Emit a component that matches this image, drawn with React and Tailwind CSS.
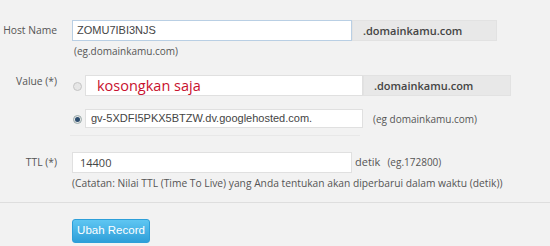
export default function App() {
  const sans = { fontFamily: '"Open Sans", "Liberation Sans", sans-serif' };
  const arial = { fontFamily: '"Liberation Sans", Arial, sans-serif' };

  return (
    <div className="w-[550px] h-[246px] overflow-hidden bg-[#f2f2f2] text-[#555]" style={sans}>
      <div className="pt-[20px]">
        {/* Host Name */}
        <div className="flex">
          <div className="w-[57px] shrink-0 text-right text-[10.3px] leading-[21px] whitespace-nowrap">Host Name</div>
          <div className="ml-[15px]">
            <div className="flex items-start">
              <div className="w-[280px] h-[21px] border border-[#b9cfe4] bg-white pl-[4px] text-[11px] leading-[19px] text-[#444]" style={arial}>
                ZOMU7IBI3NJS
              </div>
              <div className="w-[145px] h-[21px] bg-[#e8e8e8] border border-[#e2e2e2] pl-[10px] text-[11px] font-semibold leading-[19px] text-[#444]">
                .domainkamu.com
              </div>
            </div>
            <div className="mt-[3px] ml-[2px] h-[14px] text-[10px] leading-[14px]">(eg.domainkamu.com)</div>
          </div>
        </div>

        {/* Value */}
        <div className="flex mt-[17px]">
          <div className="w-[57px] shrink-0 text-right text-[10.3px] leading-[12px]">Value (*)</div>
          <div className="ml-[15px]">
            <div className="flex items-center h-[21px]">
              <span className="w-[9px] h-[9px] rounded-full border border-[#c4c4c4] bg-[#e6e6e6] ml-[1px] mr-[3px] mt-[2px]" />
              <div className="w-[278px] h-[21px] border border-[#e0e0e0] bg-white pl-[11px] text-[14.5px] leading-[19px] text-[#c8102e]">
                kosongkan saja
              </div>
              <div className="w-[148px] h-[21px] bg-[#e8e8e8] border border-[#e2e2e2] pl-[10px] text-[11px] font-semibold leading-[19px] text-[#444]">
                .domainkamu.com
              </div>
            </div>
            <div className="flex items-center h-[19px] mt-[13px]">
              <span className="w-[9px] h-[9px] rounded-full border border-[#9aa] bg-[#e6e6e6] ml-[1px] mr-[3px] mt-[2px] flex items-center justify-center">
                <span className="w-[5px] h-[5px] rounded-full bg-[#2c4d6e]" />
              </span>
              <div className="w-[278px] h-[19px] border border-[#e0e0e0] bg-white pl-[5px] text-[11px] leading-[17px] text-[#444]" style={arial}>
                gv-5XDFI5PKX5BTZW.dv.googlehosted.com.
              </div>
              <div className="ml-[10px] text-[10px] leading-[14px]">(eg domainkamu.com)</div>
            </div>
            <div className="mt-[7px] ml-[-2px] w-[290px] h-px bg-[#e8e8e8]" />
          </div>
        </div>

        {/* TTL */}
        <div className="flex mt-[16px]">
          <div className="w-[57px] shrink-0 text-right text-[10.3px] leading-[21px]">TTL (*)</div>
          <div className="ml-[15px]">
            <div className="flex items-center h-[21px]">
              <div className="w-[280px] h-[21px] border border-[#e0e0e0] bg-white pl-[7px] text-[11px] leading-[19px] text-[#444]">
                14400
              </div>
              <span className="ml-[3px] text-[11px]">detik</span>
              <span className="ml-[7px] text-[10px]">(eg.172800)</span>
            </div>
            <div className="mt-[3px] text-[10.25px] leading-[14px] whitespace-nowrap">
              (Catatan: Nilai TTL (Time To Live) yang Anda tentukan akan diperbarui dalam waktu (detik))
            </div>
          </div>
        </div>

        <div className="mt-[12px] h-px w-full bg-[#dedede]" />

        <div className="pl-[72px] pt-[13px]">
          <button className="w-[78px] h-[24px] rounded-[3px] border border-[#2d9fd9] bg-gradient-to-b from-[#5ec6f2] to-[#2d9fd9] text-white text-[11.5px]" style={arial}>
            Ubah Record
          </button>
        </div>
      </div>
    </div>
  );
}
